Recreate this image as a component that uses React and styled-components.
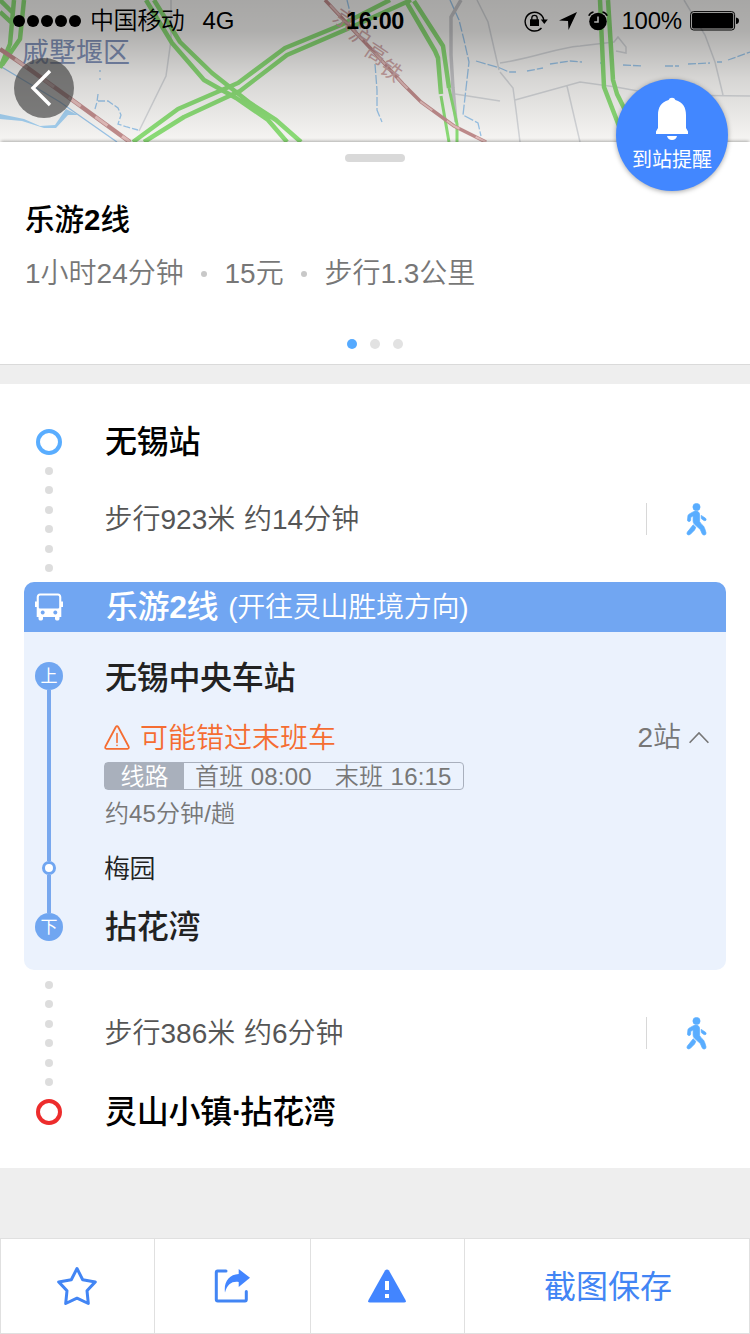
import React from 'react';
import styled, { createGlobalStyle } from 'styled-components';

const GlobalStyle = createGlobalStyle`
  * { box-sizing: border-box; }
  body {
    margin: 0;
    background: #eee;
    font-family: "Liberation Sans", "Noto Sans CJK SC", sans-serif;
    font-weight: 350;
    color: #000;
  }
  svg { display: block; flex: none; }
`;

const Screen = styled.div`
  position: relative;
  width: 750px;
  height: 1334px;
  display: flex;
  flex-direction: column;
  overflow: hidden;
`;

const MapArea = styled.div`
  height: 142px;
  flex: none;
`;

const StatusBar = styled.header`
  position: absolute;
  inset: 0 0 auto 0;
  height: 40px;
  display: grid;
  grid-template-columns: 1fr auto 1fr;
  align-items: center;
  padding: 1px 10px 0 13px;
  font-size: 24px;
  line-height: 40px;
`;

const StatusGroup = styled.div`
  display: flex;
  align-items: center;
  justify-content: ${(p) => (p.$end ? 'flex-end' : 'flex-start')};
  gap: ${(p) => p.$gap || 0}px;
`;

const Signal = styled.i`
  width: 12px;
  height: 12px;
  border-radius: 50%;
  background: #000;
`;

const Carrier = styled.span`
  margin-left: 7px;
  letter-spacing: -0.4px;
`;

const Network = styled.span`
  margin-left: 16px;
`;

const BatteryLevel = styled.span`
  margin: 0 -3px 0 2px;
  letter-spacing: -0.2px;
`;

const Clock = styled.span`
  font-weight: 700;
  font-size: 23.4px;
  letter-spacing: -0.4px;
  margin-right: 3px;
`;

const BackButton = styled.button`
  position: absolute;
  left: 14px;
  top: 58px;
  width: 60px;
  height: 60px;
  padding: 0;
  border: 0;
  border-radius: 50%;
  background: rgba(60, 60, 60, 0.64);
`;

const AlarmButton = styled.button`
  position: absolute;
  left: 616px;
  top: 79px;
  width: 112px;
  height: 112px;
  padding: 18px 0 0;
  border: 0;
  border-radius: 50%;
  background: #4287ff;
  box-shadow: 0 1px 5px rgba(0, 0, 0, 0.35);
  color: #fff;
  font: inherit;
  font-weight: 400;
  font-size: 20px;
  line-height: 24px;
  display: flex;
  flex-direction: column;
  align-items: center;
  gap: 7px;
`;

const Summary = styled.section`
  height: 223px;
  flex: none;
  background: #fff;
  border-bottom: 1px solid #dadada;
  box-shadow: 0 -2px 3px -1px rgba(0, 0, 0, 0.3);
  padding: 12px 25px 0;
  display: flex;
  flex-direction: column;
  position: relative;
`;

const Handle = styled.div`
  width: 60px;
  height: 8px;
  border-radius: 4px;
  background: #d9d9d9;
  align-self: center;
`;

const SummaryTitle = styled.h1`
  margin: 38px 0 0;
  font-size: 29.5px;
  line-height: 40px;
  font-weight: 500;
`;

const Digit = styled.span`
  font-weight: 700;
`;

const Facts = styled.div`
  display: flex;
  align-items: center;
  margin-top: 14px;
  font-size: 28px;
  line-height: 40px;
  color: #777;
`;

const Separator = styled.i`
  width: 6px;
  height: 6px;
  border-radius: 50%;
  background: #c8c8c8;
  margin: 0 17.4px;
`;

const Pager = styled.div`
  display: flex;
  justify-content: center;
  gap: 13px;
  margin-top: 45px;
`;

const PageDot = styled.i`
  width: 10px;
  height: 10px;
  border-radius: 50%;
  background: ${(p) => (p.$active ? '#55aaff' : '#e2e2e2')};
`;

const Route = styled.main`
  margin-top: 19px;
  height: 784px;
  flex: none;
  background: #fff;
  padding: 36px 24px 0;
`;

const StationRow = styled.div`
  height: ${(p) => p.$height}px;
  display: grid;
  grid-template-columns: 50px 1fr;
  column-gap: 31px;
  align-items: center;
`;

const Ring = styled.i`
  width: 26px;
  height: 26px;
  border-radius: 50%;
  border: 4px solid ${(p) => p.$color};
  justify-self: center;
`;

const StationName = styled.h2`
  margin: 0;
  font-size: 32px;
  line-height: 44px;
  letter-spacing: -0.3px;
  font-weight: 500;
  color: ${(p) => p.$color || '#000'};
`;

const NameDot = styled.span`
  font-weight: 700;
  letter-spacing: -2px;
`;

const WalkRow = styled.div`
  height: 120px;
  display: grid;
  grid-template-columns: 50px 1fr auto;
  column-gap: 30.5px;
`;

const DotRail = styled.div`
  display: flex;
  flex-direction: column;
  align-items: center;
  gap: 11.4px;
  padding-top: ${(p) => p.$top}px;
`;

const RailDot = styled.i`
  width: 8px;
  height: 8px;
  flex: none;
  border-radius: 50%;
  background: #ddd;
`;

const WalkText = styled.div`
  font-size: 28px;
  line-height: 40px;
  word-spacing: 1px;
  color: #555;
  padding-top: ${(p) => p.$top - 19}px;
`;

const WalkAction = styled.div`
  margin-top: ${(p) => p.$top - 16}px;
  width: 80px;
  height: 32px;
  border-left: 1px solid #d8d8d8;
  padding-left: 39px;
`;

const BusCard = styled.section`
  border-radius: 10px;
  overflow: hidden;
  background: #ebf2fd;
  height: 388px;
`;

const BusHeader = styled.header`
  height: 50px;
  background: #71a6f2;
  color: #fff;
  display: grid;
  grid-template-columns: 50px auto auto;
  justify-content: start;
  align-items: center;
  svg { justify-self: center; }
`;

const LineName = styled.strong`
  margin-left: 32px;
  font-size: 32px;
  letter-spacing: -0.4px;
  font-weight: 500;
  line-height: 50px;
`;

const Direction = styled.span`
  margin-left: 10px;
  padding-top: 2px;
  font-size: 28px;
  letter-spacing: -0.25px;
  line-height: 48px;
`;

const BusBody = styled.div`
  height: 338px;
  display: grid;
  grid-template-columns: 50px 1fr;
  column-gap: 31px;
`;

const StopRail = styled.div`
  display: flex;
  flex-direction: column;
  align-items: center;
  padding: 30px 0 29px;
`;

const StopBadge = styled.b`
  width: 28px;
  height: 28px;
  flex: none;
  border-radius: 50%;
  background: #70a6f1;
  color: #fff;
  font-size: 17px;
  line-height: 29px;
  font-weight: 400;
  text-align: center;
`;

const RailLine = styled.i`
  width: 4px;
  height: ${(p) => p.$length}px;
  background: #78a8ee;
`;

const StopNode = styled.i`
  width: 14px;
  height: 14px;
  border-radius: 50%;
  border: 3px solid #70a6f1;
  background: #fff;
`;

const Stops = styled.div`
  padding: 24px 17px 0 0;
  display: flex;
  flex-direction: column;
`;

const AlertRow = styled.div`
  display: flex;
  align-items: center;
  height: 34px;
  margin: 21px 0 7px -1px;
  font-size: 28px;
  line-height: 34px;
`;

const AlertText = styled.span`
  color: #f56d32;
  margin-left: 10px;
  padding-top: 2px;
`;

const StopCount = styled.span`
  margin: -1px 8px 0 auto;
  color: #777;
`;

const Timetable = styled.div`
  display: flex;
  align-self: flex-start;
  width: 360px;
  height: 28px;
  margin-left: -1px;
  border: 1px solid #a9b0bd;
  border-radius: 4px;
  font-size: 24px;
  line-height: 28px;
  color: #777;
  white-space: nowrap;
`;

const TimetableLabel = styled.span`
  width: 79px;
  background: #a9b0bc;
  color: #fff;
  text-align: center;
`;

const Departure = styled.span`
  margin-left: ${(p) => p.$gap}px;
  word-spacing: 0.5px;
  letter-spacing: 0.2px;
`;

const Frequency = styled.div`
  margin-top: 8px;
  font-size: 24px;
  line-height: 32px;
  height: 30px;
  letter-spacing: 0.1px;
  color: #777;
`;

const MiddleStop = styled.div`
  margin: 22px 0 19px -1px;
  height: 36px;
  font-size: 26px;
  letter-spacing: -0.4px;
  line-height: 38px;
  color: #222;
`;

const Toolbar = styled.nav`
  margin-top: auto;
  height: 96px;
  flex: none;
  display: grid;
  grid-template-columns: 154px 156px 154px 1fr;
  background: #fff;
  border: 1px solid #e0e0e0;
  border-left: 0;
`;

const Tool = styled.button`
  border: 0;
  border-left: 1px solid #e0e0e0;
  background: none;
  padding: ${(p) => (p.$label ? '0 0 4px 2px' : '0 2px 0 0')};
  display: flex;
  align-items: center;
  justify-content: center;
  font: inherit;
  font-size: 32px;
  font-weight: 400;
  color: #4285f4;
`;

const MapDrawing = () => (
  <svg width="750" height="142" viewBox="0 0 750 142" fill="none">
    <defs>
      <linearGradient id="shade" x1="0" y1="0" x2="0" y2="1">
        <stop offset="0" stopColor="#000" stopOpacity="0.32" />
        <stop offset="0.22" stopColor="#000" stopOpacity="0.29" />
        <stop offset="0.55" stopColor="#000" stopOpacity="0.13" />
        <stop offset="1" stopColor="#000" stopOpacity="0" />
      </linearGradient>
    </defs>
    <rect width="750" height="142" fill="#f6f5f3" />
    <g stroke="#d3d5d8" strokeWidth="1.5">
      <path d="M171 0 L171 40 L166 76 L139 131" />
      <path d="M477 0 L488 22 L499 70" />
      <path d="M455 94 L500 101" />
      <path d="M500 63 C535 58 555 48 580 46 L614 42 L618 37 L626 47 L626 53 L616 51" />
      <path d="M500 72 L513 88 L516 110 L520 142 M515 100 L580 82 L616 87 L660 95 L750 96 M567 86 L580 142" />
      <path d="M684 0 L705 35 L715 62 L723 95" />
    </g>
    <g stroke="#9ac4e8" strokeWidth="1.3">
      <path d="M0 66 L60 102 L117 142" />
      <path d="M100 70 V72 M100 78 V80 M98 94 L97 102 L95 109 M98 101 L108 101 L118 108 L121 115 L118 124 L127 127 L138 130" strokeDasharray="7 2" />
      <path d="M347 0 L350 12 M375 64 L377 90 L377 110 L382 122" strokeDasharray="9 2" />
      <path d="M450 0 L459 20 L464 40 L469 62 L463 115 L478 123 L481 136 M476 61 L500 68" strokeDasharray="10 2" />
      <path d="M500 68 L509 72 L516 72 M527 71 L543 68 M550 64 L570 61 L582 62 M600 63 H605 M623 65 L643 66 M665 66 H679 M688 64 L710 63 M717 62 L722 62 M728 60 L750 52" strokeDasharray="8 2" />
    </g>
    <path d="M0 114 L24 119 L40 126 L55 125 L66 109 L78 115 L68 115 L56 128 L44 128 L22 121 L0 119Z" fill="#a3cfef" />
    <path d="M461 0 L451 17 V55 L453 88 L456 122" stroke="#c6c6c9" strokeWidth="3.5" />
    <g stroke="#8bdc76" strokeWidth="4.5" strokeLinejoin="round">
      <path d="M14 0 L10 44 L0 68 M24 0 L20 39 L2 65 M0 0 L12 12 M0 12 L12 23" />
      <path d="M146 0 L172 43 L204 80 L236 98 L268 120 L287 142 M154 0 L180 42 L212 73 L250 103 L276 120 L301 142" />
      <path d="M133 142 L178 109 L238 83 L285 48 L341 25 L390 0 M144 142 L184 117 L240 91 L287 55 L345 30 L411 0" />
      <path d="M407 3 L435 51 L438 58 L441 94" />
      <path d="M414 1 L443 46 L449 88" />
      <path d="M441 96 L449 142 M449 88 L457 124 V142" strokeWidth="3" />
      <path d="M600 0 L604 87 L619 126 M608 0 L613 80 L617 94 L630 120" />
    </g>
    <g stroke="#c08c8c" strokeWidth="4.5">
      <path d="M0 49 L25 66 L75 102 L130 142" />
      <path d="M325 0 L374 52 L403 84 L421 102 L454 126 L486 142" strokeWidth="3.5" />
    </g>
    <g stroke="#e3bdbb" strokeWidth="3" strokeDasharray="15 18">
      <path d="M15 59 L75 102 L130 142" />
      <path d="M330 5 L374 52 L403 84 L421 102 L454 126 L486 142" strokeWidth="2" />
    </g>
    <g fill="#cfa8a8" fontSize="21" fontWeight="400" textAnchor="middle">
      <text transform="translate(344 20) rotate(34)" y="7">京</text>
      <text transform="translate(360 37) rotate(34)" y="7">沪</text>
      <text transform="translate(376 54) rotate(34)" y="7">高</text>
      <text transform="translate(391 71) rotate(34)" y="7">铁</text>
    </g>
    <text x="22" y="62" fill="#8292b8" fontSize="27" fontWeight="400">戚墅堰区</text>
    <rect width="750" height="142" fill="url(#shade)" />
  </svg>
);

const LockIcon = () => (
  <svg width="24" height="22" viewBox="0 0 24 22" fill="none" stroke="#000">
    <path d="M17.5 18 A9.4 9.4 0 1 1 19.8 10" strokeWidth="1.4" />
    <path d="M16.8 9.5 h7 l-3.5 4.5z" fill="#000" stroke="none" />
    <rect x="6" y="9.3" width="9" height="6.7" fill="#000" stroke="none" />
    <path d="M7.8 10 V8 a2.7 2.7 0 0 1 5.4 0 v2" strokeWidth="1.3" />
  </svg>
);

const LocationIcon = () => (
  <svg width="18" height="18" viewBox="0 0 18 18">
    <path d="M18 0 L9.5 18 L9 9 L0 8.5Z" />
  </svg>
);

const ClockIcon = () => (
  <svg width="20" height="20" viewBox="0 0 20 20" fill="none" stroke="#000">
    <circle cx="10" cy="10.5" r="8.8" fill="#000" stroke="none" />
    <path d="M0.8 4.8 Q2 1.8 5.5 1 M19.2 4.8 Q18 1.8 14.5 1" strokeWidth="1.5" />
    <path d="M10 5.5 V11 H6.2" stroke="#b0b0b0" strokeWidth="1.6" />
  </svg>
);

const BatteryIcon = () => (
  <svg width="50" height="20" viewBox="0 0 50 20">
    <rect x="0.6" y="0.6" width="44" height="18.4" rx="3" fill="none" stroke="#000" />
    <rect x="2" y="2" width="41.2" height="15.6" rx="1.6" />
    <path d="M46 6.5 q3 .5 3 3.3 t-3 3.3z" />
  </svg>
);

const BellIcon = () => (
  <svg width="34" height="44" viewBox="0 0 34 44" fill="#fff">
    <path d="M17 0.8 q2.7 0 3.4 2.3 C28 5 31 11 31 18 V31 L33 34.5 V37 H1 V34.5 L3 31 V18 C3 11 6 5 13.6 3.1 Q14.3 0.8 17 0.8Z" />
    <path d="M12 39 h10 q-1 4 -5 4 t-5 -4z" />
  </svg>
);

const WalkIcon = () => (
  <svg width="22" height="33" viewBox="0 0 22 33" fill="#59adff" stroke="#59adff" strokeWidth="0.7" strokeLinejoin="round">
    <circle cx="10.5" cy="4" r="3.6" />
    <path d="M7 8.9 Q10 7.4 12.2 8.7 Q13.6 9.8 13.6 12 V18.5 Q14.2 20.3 17.5 23 Q18.8 25 20 29.8 Q20.3 31.8 18.5 32 Q16.7 32.3 16 30.5 L14.3 26.5 L8.5 21.3 Q7.1 19.8 7.1 18 V12.8 L4.7 14.5 V17.2 Q4.2 18.8 2.8 18.6 Q1.4 18.3 1.5 17 L1.9 13 Q2 11.8 3 11.2Z" />
    <path d="M7.2 21.8 L9.8 24.3 L8.6 27 L4.4 31.3 Q2.7 32.5 1.4 31.5 Q0.5 30.4 1.4 29Z" />
    <path d="M15.2 12.4 L19.6 15.3 Q20.6 16.5 19.8 17.4 Q19 18 17.5 17.3 L15.3 15.6Z" />
  </svg>
);

const BusIcon = () => (
  <svg width="30" height="28" viewBox="0 0 30 28" fill="#fff">
    <path fillRule="evenodd" d="M6 0.5 H24 Q27 0.5 27.3 4 V8.5 H29 V14 H27.3 V24 H25.5 V25.5 Q25.5 27.5 24 27.5 H22.5 Q21 27.5 21 25.5 V24 H9 V25.5 Q9 27.5 7.5 27.5 H6 Q4.5 27.5 4.5 25.5 V24 H2.7 V14 H1 V8.5 H2.7 V4 Q3 0.5 6 0.5Z M6 2.5 Q4.8 2.5 4.8 4 V14.5 Q4.8 15.5 6 15.5 H24 Q25.2 15.5 25.2 14.5 V4 Q25.2 2.5 24 2.5Z M8.7 17.5 a2 2 0 1 0 .01 0Z M21.3 17.5 a2 2 0 1 0 .01 0Z" />
  </svg>
);

const WarningOutline = () => (
  <svg width="26" height="26" viewBox="0 0 26 26" fill="none" stroke="#f56d32" strokeWidth="1.8" strokeLinejoin="round" strokeLinecap="round">
    <path d="M11.8 2 Q13 0.2 14.2 2 L24.6 21.5 Q25.4 23.7 23.4 23.9 H2.6 Q0.6 23.7 1.4 21.5Z" />
    <path d="M13 8.5 V17.5 M13 20.3 V20.5" strokeWidth="1.6" />
  </svg>
);

const ChevronUp = () => (
  <svg width="20" height="12" viewBox="0 0 20 12" fill="none" stroke="#777" strokeWidth="1.6">
    <path d="M0.6 10.8 L10 0.9 L19.4 10.8" />
  </svg>
);

const StarIcon = () => (
  <svg width="42" height="42" viewBox="0 0 42 42" fill="none" stroke="#4285f4" strokeWidth="3" strokeLinejoin="round">
    <path d="M21 3.5 L26.7 14.8 L39.3 16.9 L31 25.7 L32.3 38.5 L21 33.2 L9.7 38.5 L11 25.7 L2.7 16.9 L15.3 14.8Z" />
  </svg>
);

const ShareIcon = () => (
  <svg width="36" height="36" viewBox="0 0 36 36" fill="none" stroke="#4285f4" strokeWidth="3" strokeLinecap="round" strokeLinejoin="round">
    <path d="M12 3 H3.6 Q2.3 3 2.3 4.3 V31.5 Q2.3 33 3.8 33 H31 Q32.3 33 32.3 31.5 V23.5" />
    <path d="M24.7 1 L36 9.8 L24.7 19 V14 C18 13 13.5 16 11 24.5 C9.5 14 15 6.5 24.7 6Z" fill="#4285ff" stroke="none" />
  </svg>
);

const WarningIcon = () => (
  <svg width="38" height="34" viewBox="0 0 38 34">
    <path d="M17 1.6 Q19 -0.8 21 1.6 L37.5 31 Q38.6 33.4 36 33.5 H2 Q-0.6 33.4 0.5 31Z" fill="#4285ff" />
    <path d="M19 12 V21 M19 25 V29" stroke="#fff" strokeWidth="4" />
  </svg>
);

const Walk = ({ text, dotsTop, center }) => (
  <WalkRow>
    <DotRail $top={dotsTop}>
      {[0, 1, 2, 3, 4, 5].map((n) => <RailDot key={n} />)}
    </DotRail>
    <WalkText $top={center}>{text}</WalkText>
    <WalkAction $top={center}><WalkIcon /></WalkAction>
  </WalkRow>
);

export default function App() {
  return (
    <Screen>
      <GlobalStyle />
      <MapArea><MapDrawing /></MapArea>

      <Summary>
        <Handle />
        <SummaryTitle>乐游<Digit>2</Digit>线</SummaryTitle>
        <Facts>
          <span>1小时24分钟</span><Separator />
          <span>15元</span><Separator />
          <span>步行1.3公里</span>
        </Facts>
        <Pager><PageDot $active /><PageDot /><PageDot /></Pager>
      </Summary>

      <Route>
        <StationRow $height={42}>
          <Ring $color="#59adff" />
          <StationName>无锡站</StationName>
        </StationRow>
        <Walk text="步行923米 约14分钟" dotsTop={5} center={57} />

        <BusCard>
          <BusHeader>
            <BusIcon />
            <LineName>乐游<Digit>2</Digit>线</LineName>
            <Direction>(开往灵山胜境方向)</Direction>
          </BusHeader>
          <BusBody>
            <StopRail>
              <StopBadge>上</StopBadge>
              <RailLine $length={171} />
              <StopNode />
              <RailLine $length={38} />
              <StopBadge>下</StopBadge>
            </StopRail>
            <Stops>
              <StationName $color="#222">无锡中央车站</StationName>
              <AlertRow>
                <WarningOutline />
                <AlertText>可能错过末班车</AlertText>
                <StopCount>2站</StopCount>
                <ChevronUp />
              </AlertRow>
              <Timetable>
                <TimetableLabel>线路</TimetableLabel>
                <Departure $gap={11}>首班 08:00</Departure>
                <Departure $gap={23}>末班 16:15</Departure>
              </Timetable>
              <Frequency>约45分钟/趟</Frequency>
              <MiddleStop>梅园</MiddleStop>
              <StationName $color="#222">拈花湾</StationName>
            </Stops>
          </BusBody>
        </BusCard>

        <Walk text="步行386米 约6分钟" dotsTop={11} center={63} />
        <StationRow $height={44}>
          <Ring $color="#ed2c2c" />
          <StationName>灵山小镇<NameDot>·</NameDot>拈花湾</StationName>
        </StationRow>
      </Route>

      <Toolbar>
        <Tool aria-label="收藏"><StarIcon /></Tool>
        <Tool aria-label="分享"><ShareIcon /></Tool>
        <Tool aria-label="报错"><WarningIcon /></Tool>
        <Tool $label>截图保存</Tool>
      </Toolbar>

      <StatusBar>
        <StatusGroup $gap={2}>
          <Signal /><Signal /><Signal /><Signal /><Signal />
          <Carrier>中国移动</Carrier>
          <Network>4G</Network>
        </StatusGroup>
        <Clock>16:00</Clock>
        <StatusGroup $end $gap={11}>
          <LockIcon />
          <LocationIcon />
          <ClockIcon />
          <BatteryLevel>100%</BatteryLevel>
          <BatteryIcon />
        </StatusGroup>
      </StatusBar>
      <BackButton aria-label="返回">
        <svg width="60" height="60" viewBox="0 0 60 60" fill="none" stroke="#fff" strokeWidth="3.4">
          <path d="M36 13 L19 30 L36 47" />
        </svg>
      </BackButton>
      <AlarmButton><BellIcon />到站提醒</AlarmButton>
    </Screen>
  );
}
